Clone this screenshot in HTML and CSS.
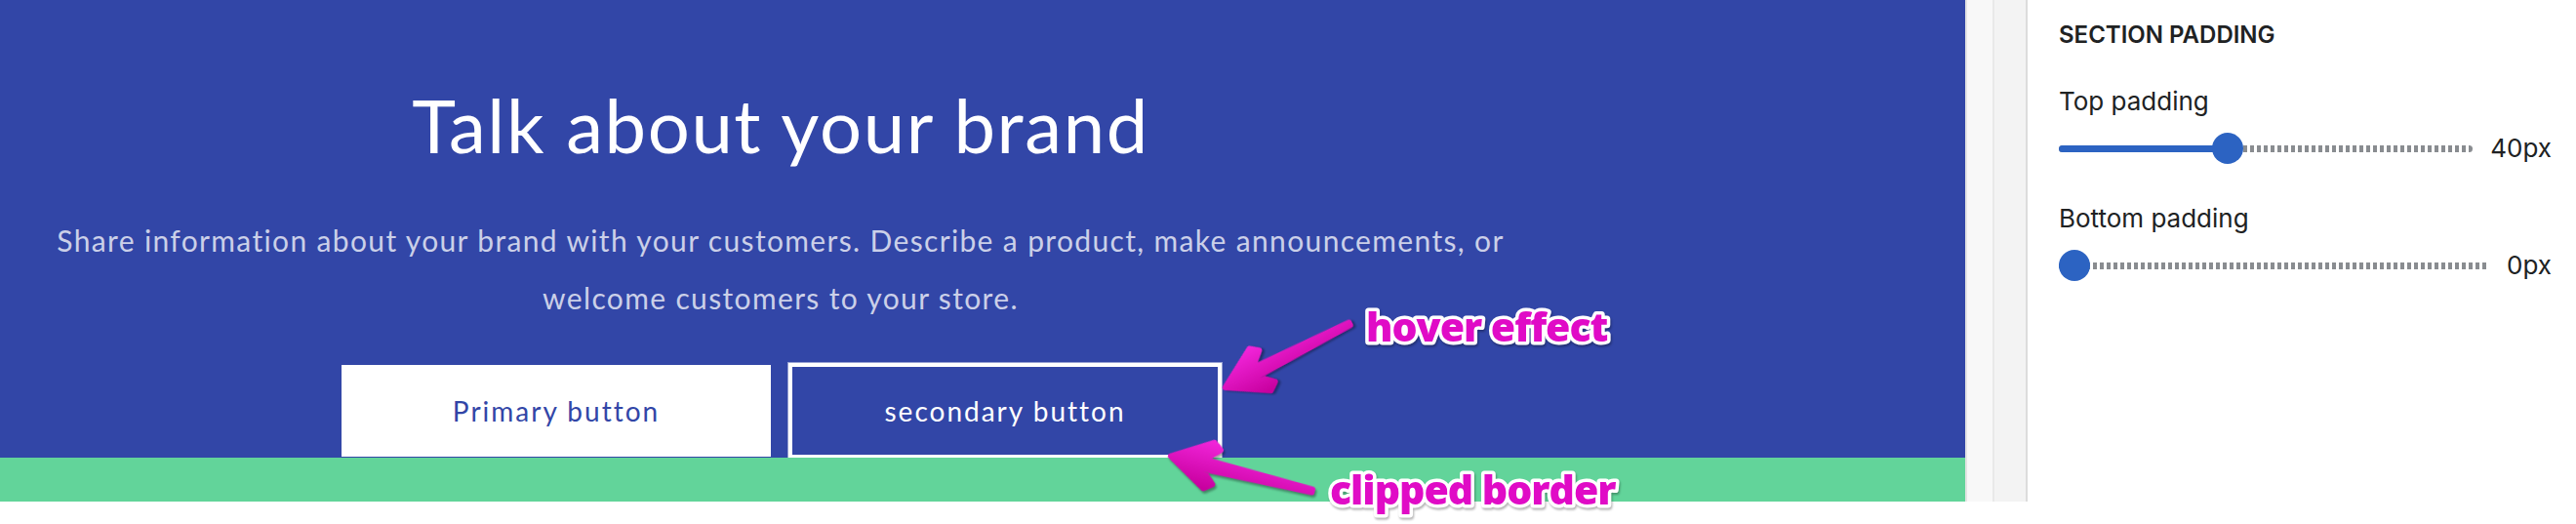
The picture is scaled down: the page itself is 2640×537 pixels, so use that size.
FILE: index.html
```html
<!DOCTYPE html>
<html lang="en">
<head>
    <meta charset="UTF-8">
    <title>Theme editor - Rich text</title>
    <link rel="stylesheet" href="styles.css">
</head>
<body>
    <div class="editor">
        <div class="preview">
            <section class="rich-text">
                <div class="rich-text__wrapper">
                    <h2 class="rich-text__heading">Talk about your brand</h2>
                    <p class="rich-text__body">Share information about your brand with your customers. Describe a product, make announcements, or welcome customers to your store.</p>
                    <div class="rich-text__buttons">
                        <a href="#" class="button button--primary">Primary button</a>
                        <a href="#" class="button button--secondary is-hover">secondary button</a>
                    </div>
                </div>
            </section>
            <section class="next-section"></section>
        </div>

        <div class="gutter">
            <div class="gutter__rail"></div>
            <div class="gutter__track"></div>
        </div>

        <aside class="settings">
            <h3 class="settings__title">SECTION PADDING</h3>

            <div class="field">
                <label class="field__label">Top padding</label>
                <div class="range">
                    <div class="range__track">
                        <div class="range__fill" style="width: calc((100% - 32px) * 0.4 + 16px);"></div>
                        <div class="range__thumb" style="left: calc((100% - 32px) * 0.4);"></div>
                    </div>
                    <span class="range__value">40px</span>
                </div>
            </div>

            <div class="field">
                <label class="field__label">Bottom padding</label>
                <div class="range">
                    <div class="range__track">
                        <div class="range__fill" style="width: 16px;"></div>
                        <div class="range__thumb" style="left: 0;"></div>
                    </div>
                    <span class="range__value">0px</span>
                </div>
            </div>
        </aside>
    </div>

    <!-- notes drawn on top of the editor -->
    <svg class="notes" width="2640" height="537" viewBox="0 0 2640 537">
        <defs>
            <linearGradient id="pink" x1="0" y1="0" x2="0" y2="1">
                <stop offset="0" stop-color="#f024d8"/>
                <stop offset="1" stop-color="#c8009f"/>
            </linearGradient>
        </defs>
        <g class="note-arrow" transform="translate(1254 398) rotate(-27.1)">
            <path d="M2,0 L42,-24 L50,-18 L36,-5 L145,-1.5 L145,1.5 L36,5 L50,18 L42,24 Z"/>
        </g>
        <g class="note-arrow" transform="translate(1198 467) rotate(13.8)">
            <path d="M2,0 L42,-24 L50,-18 L36,-5 L151,-1.5 L151,1.5 L36,5 L50,18 L42,24 Z"/>
        </g>
        <text class="note-text" x="1400" y="350">hover effect</text>
        <text class="note-text" x="1363" y="517">clipped border</text>
    </svg>
</body>
</html>
```

FILE: styles.css
```css
body {
    margin: 0;
    background: #fff;
    font-family: "Lato", sans-serif;
}

.editor {
    display: flex;
    height: 514px;
}

/* storefront preview */
.preview {
    width: 2014px;
    flex-shrink: 0;
    display: flex;
    flex-direction: column;
}

.rich-text {
    height: 469px;
    background-color: #3246a7;
    overflow: hidden;
    box-sizing: border-box;
    padding-top: 82px;
}

.rich-text__wrapper {
    width: 1600px;
    display: flex;
    flex-direction: column;
    align-items: center;
    text-align: center;
}

.rich-text__heading {
    margin: 0;
    font-size: 76px;
    font-weight: 400;
    line-height: 1.2;
    letter-spacing: 1.6px;
    color: #fff;
}

.rich-text__body {
    margin: 44px 0 0;
    max-width: 1530px;
    font-size: 30px;
    line-height: 58.5px;
    letter-spacing: 1.35px;
    color: rgba(255, 255, 255, 0.75);
}

.rich-text__buttons {
    display: flex;
    gap: 20px;
    margin-top: 40px;
}

.button {
    width: 440px;
    height: 94px;
    box-sizing: border-box;
    display: flex;
    align-items: center;
    justify-content: center;
    font-size: 28px;
    letter-spacing: 2px;
    text-decoration: none;
}

.button--primary {
    background: #fff;
    color: #3246a7;
}

.button--secondary {
    color: #fff;
    border: 2px solid #fff;
}

.button--secondary.is-hover {
    box-shadow: 0 0 0 2px #fff, 0 0 0 3px rgba(255, 255, 255, 0.5);
}

.next-section {
    height: 45px;
    background-color: #62d49a;
}

/* splitter between preview and sidebar */
.gutter {
    width: 64px;
    flex-shrink: 0;
    display: flex;
    box-sizing: border-box;
    border-left: 2px solid #e4e4e4;
    border-right: 2px solid #dcdcdc;
}

.gutter__rail {
    width: 26px;
    background: #f8f8f8;
    border-right: 2px solid #e9e9e9;
}

.gutter__track {
    flex: 1;
    background: #f3f3f3;
}

/* settings sidebar */
.settings {
    flex: 1;
    background: #fff;
    padding: 20px 25px 0 32px;
    font-family: "Inter", sans-serif;
    color: #202223;
}

.settings__title {
    margin: 0;
    font-size: 24px;
    line-height: 32px;
    font-weight: 600;
}

.field {
    margin-top: 34px;
}

.field + .field {
    margin-top: 38px;
}

.field__label {
    display: block;
    font-size: 26px;
    line-height: 36px;
}

.range {
    display: flex;
    align-items: center;
    gap: 18px;
    margin-top: 14px;
    height: 32px;
}

.range__track {
    position: relative;
    flex: 1;
    height: 7px;
    border-radius: 4px;
    background: repeating-linear-gradient(90deg, #898c90 0 4px, transparent 4px 7px);
}

.range__fill {
    position: absolute;
    left: 0;
    top: 0;
    height: 100%;
    border-radius: 4px;
    background: #2c63c2;
}

.range__thumb {
    position: absolute;
    top: 50%;
    width: 32px;
    height: 32px;
    margin-top: -16px;
    border-radius: 50%;
    background: #2c63c2;
}

.range__value {
    font-size: 26px;
    line-height: 32px;
}

/* annotations */
.notes {
    position: absolute;
    left: 0;
    top: 0;
    pointer-events: none;
}

.note-arrow path {
    fill: url(#pink);
    stroke: url(#pink);
    stroke-width: 6;
    stroke-linejoin: round;
    filter: drop-shadow(2px 2px 1px rgba(0, 0, 0, 0.35));
}

.note-text {
    font-family: "Open Sans", sans-serif;
    font-weight: 800;
    font-size: 41px;
    letter-spacing: -1px;
    fill: #e00bc6;
    stroke: #fff;
    stroke-width: 7px;
    stroke-linejoin: round;
    paint-order: stroke;
    filter: drop-shadow(1px 2px 1px rgba(0, 0, 0, 0.3));
}
```
